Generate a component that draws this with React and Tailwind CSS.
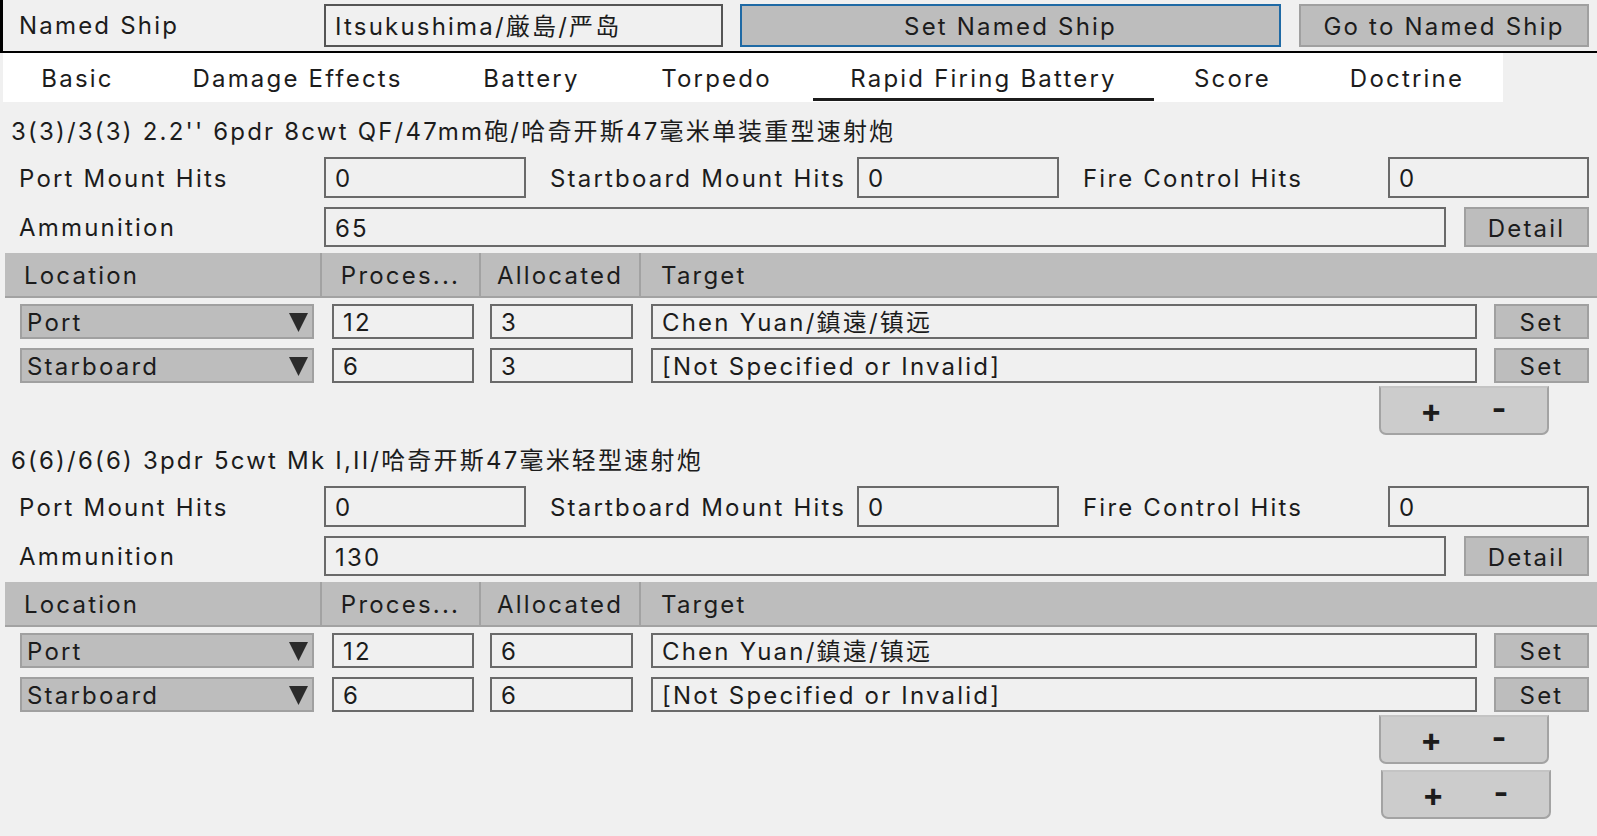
// Rapid Firing Battery editor page
const Field = ({value, className = ""}) => (
    <div className={`flex items-center border-2 border-[#6a6a6a] bg-[#f0f0f0] pl-[9px] ${className}`}>
        <span className="leading-none mt-[3px]">{value}</span>
    </div>
);

const GrayButton = ({label, className = ""}) => (
    <div className={`flex items-center justify-center border-2 border-[#a0a0a0] bg-[#bdbdbd] ${className}`}>
        <span className="leading-none mt-[3px]">{label}</span>
    </div>
);

const Combo = ({value}) => (
    <div className="flex items-center justify-between w-[294px] h-[35px] ml-[20px] border-2 border-[#a0a0a0] bg-[#bdbdbd] pl-[5px] pr-[4px]">
        <span className="leading-none mt-[3px]">{value}</span>
        <svg width="19" height="20" viewBox="0 0 19 20">
            <polygon points="0,1 19,1 9.5,20" fill="#2b2b2b" />
        </svg>
    </div>
);

const PlusMinus = ({className = ""}) => (
    <div className={`flex items-center w-[170px] h-[49px] border-2 border-[#a3a3a3] border-t-[#c4c4c4] rounded-b-[7px] bg-[#cccccc] tracking-normal ${className}`}>
        <span className="w-[100px] text-center text-[32px] font-bold leading-none">+</span>
        <span className="w-[36px] text-center text-[32px] font-bold leading-none -mt-[4px]">-</span>
    </div>
);

const tabs = [
    {name: "Basic", w: "w-[149px]"},
    {name: "Damage Effects", w: "w-[291px]"},
    {name: "Battery", w: "w-[177px]"},
    {name: "Torpedo", w: "w-[193px]"},
    {name: "Rapid Firing Battery", w: "w-[341px]", active: true},
    {name: "Score", w: "w-[157px]"},
    {name: "Doctrine", w: "w-[192px]"},
];

const Section = ({title, ammo, rows}) => (
    <div className="flex flex-col">
        <div className="h-[51px] flex items-center pl-[11px]">{title}</div>
        <div className="flex items-center h-[41px]">
            <div className="w-[324px] pl-[19px] pt-[2px]">Port Mount Hits</div>
            <Field value="0" className="w-[202px] h-[41px]" />
            <div className="w-[331px] pl-[24px] pt-[2px]">Startboard Mount Hits</div>
            <Field value="0" className="w-[202px] h-[41px]" />
            <div className="w-[329px] pl-[24px] pt-[2px]">Fire Control Hits</div>
            <Field value="0" className="w-[201px] h-[41px]" />
        </div>
        <div className="flex items-center h-[40px] mt-[9px]">
            <div className="w-[324px] pl-[19px] pt-[2px]">Ammunition</div>
            <Field value={ammo} className="w-[1122px] h-[40px]" />
            <GrayButton label="Detail" className="w-[125px] h-[40px] ml-[18px]" />
        </div>
        <div className="flex h-[45px] mt-[6px] ml-[5px] bg-[#bdbdbd] border-b-2 border-[#a2a2a2]">
            <div className="w-[317px] flex items-center pl-[19px] pt-[3px] border-r-2 border-[#a2a2a2]">Location</div>
            <div className="w-[159px] flex items-center justify-center pt-[3px] border-r-2 border-[#a2a2a2]">Proces...</div>
            <div className="w-[160px] flex items-center justify-center pt-[3px] border-r-2 border-[#a2a2a2]">Allocated</div>
            <div className="flex-1 flex items-center pl-[20px] pt-[3px]">Target</div>
        </div>
        {rows.map((r, i) => (
            <div key={i} className={`flex items-center h-[35px] ${i === 0 ? "mt-[6px]" : "mt-[9px]"}`}>
                <Combo value={r.loc} />
                <Field value={r.proc} className="w-[142px] h-[35px] ml-[18px]" />
                <Field value={r.alloc} className="w-[143px] h-[35px] ml-[16px]" />
                <Field value={r.target} className="w-[826px] h-[35px] ml-[18px]" />
                <GrayButton label="Set" className="w-[95px] h-[35px] ml-[17px]" />
            </div>
        ))}
        <div className="flex justify-start mt-[3px]">
            <PlusMinus className="ml-[1379px]" />
        </div>
    </div>
);

const App = () => {
    return (
        <div className="w-[1597px] h-[836px] overflow-hidden bg-[#f0f0f0] text-[#1c1c1c] text-[24px] tracking-[2.2px] font-['Inter','Noto_Sans_CJK_SC',sans-serif]">
            {/* 상단 바 */}
            <div className="flex items-center h-[53px] border-l-[3px] border-b-2 border-black">
                <div className="w-[321px] pl-[16px]">Named Ship</div>
                <Field value="Itsukushima/厳島/严岛" className="w-[399px] h-[43px] border-[#555555]" />
                <div className="flex items-center justify-center w-[541px] h-[43px] ml-[17px] border-2 border-[#1f6aa5] bg-[#bdbdbd]">
                    <span className="leading-none mt-[3px]">Set Named Ship</span>
                </div>
                <GrayButton label="Go to Named Ship" className="w-[290px] h-[43px] ml-[18px] border-[#999999]" />
            </div>
            {/* 탭 */}
            <div className="flex h-[49px] w-[1500px] ml-[3px] bg-white">
                {tabs.map((t) => (
                    <div key={t.name} className={`${t.w} relative flex items-center justify-center`}>
                        <span className="mt-[3px]">{t.name}</span>
                        {t.active && <div className="absolute left-0 right-0 bottom-[1px] h-[3px] bg-[#1c1c1c]" />}
                    </div>
                ))}
            </div>
            <div className="mt-[4px]">
                <Section
                    title="3(3)/3(3) 2.2'' 6pdr 8cwt QF/47mm砲/哈奇开斯47毫米单装重型速射炮"
                    ammo="65"
                    rows={[
                        {loc: "Port", proc: "12", alloc: "3", target: "Chen Yuan/鎮遠/镇远"},
                        {loc: "Starboard", proc: "6", alloc: "3", target: "[Not Specified or Invalid]"},
                    ]}
                />
                <Section
                    title="6(6)/6(6) 3pdr 5cwt Mk I,II/哈奇开斯47毫米轻型速射炮"
                    ammo="130"
                    rows={[
                        {loc: "Port", proc: "12", alloc: "6", target: "Chen Yuan/鎮遠/镇远"},
                        {loc: "Starboard", proc: "6", alloc: "6", target: "[Not Specified or Invalid]"},
                    ]}
                />
                <PlusMinus className="ml-[1381px] mt-[6px]" />
            </div>
        </div>
    );
};

export default App;
